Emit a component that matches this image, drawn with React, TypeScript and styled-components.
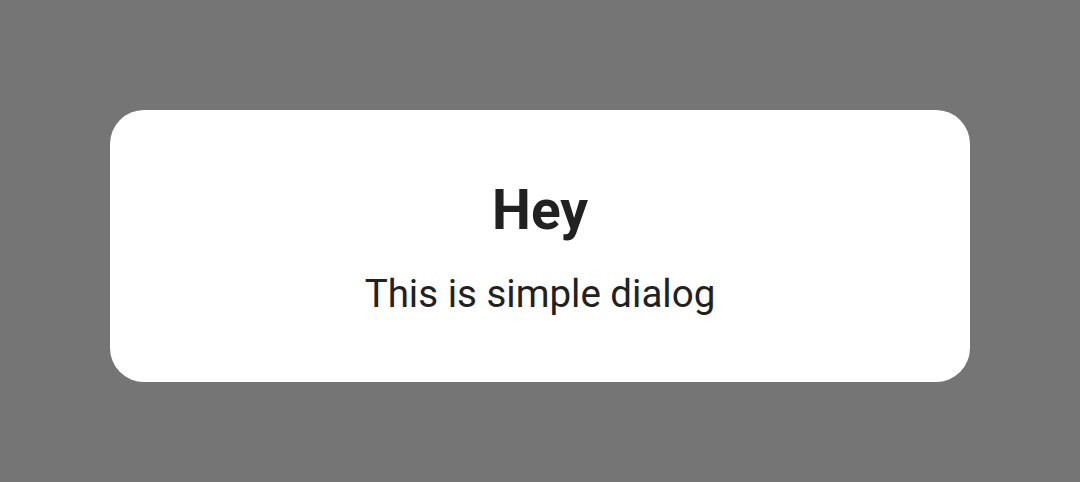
import React from "react";
import styled, { createGlobalStyle } from "styled-components";

const Global = createGlobalStyle`
  html, body { margin: 0; padding: 0; background: #757575; }
  body { font-family: Roboto, "Noto Sans", sans-serif; }
`;

const Screen = styled.div`
  width: 1080px;
  height: 482px;
  background: #757575;
  box-sizing: border-box;
  padding: 110px 110px 100px;
  display: flex;
  flex-direction: column;
`;

const Dialog = styled.div`
  height: 272px;
  background: #ffffff;
  border-radius: 34px;
  display: flex;
  flex-direction: column;
  align-items: center;
  box-sizing: border-box;
  padding-top: 68px;
`;

const Title = styled.h1`
  margin: 0;
  font-family: Roboto, sans-serif;
  font-weight: 700;
  font-size: 55px;
  line-height: 64px;
  color: #212121;
`;

const Body = styled.p`
  margin: 30px 0 0;
  font-family: Roboto, sans-serif;
  font-weight: 400;
  font-size: 38.5px;
  line-height: 44px;
  color: #212121;
`;

export default function App() {
  return (
    <>
      <Global />
      <Screen>
        <Dialog>
          <Title>Hey</Title>
          <Body>This is simple dialog</Body>
        </Dialog>
      </Screen>
    </>
  );
}
